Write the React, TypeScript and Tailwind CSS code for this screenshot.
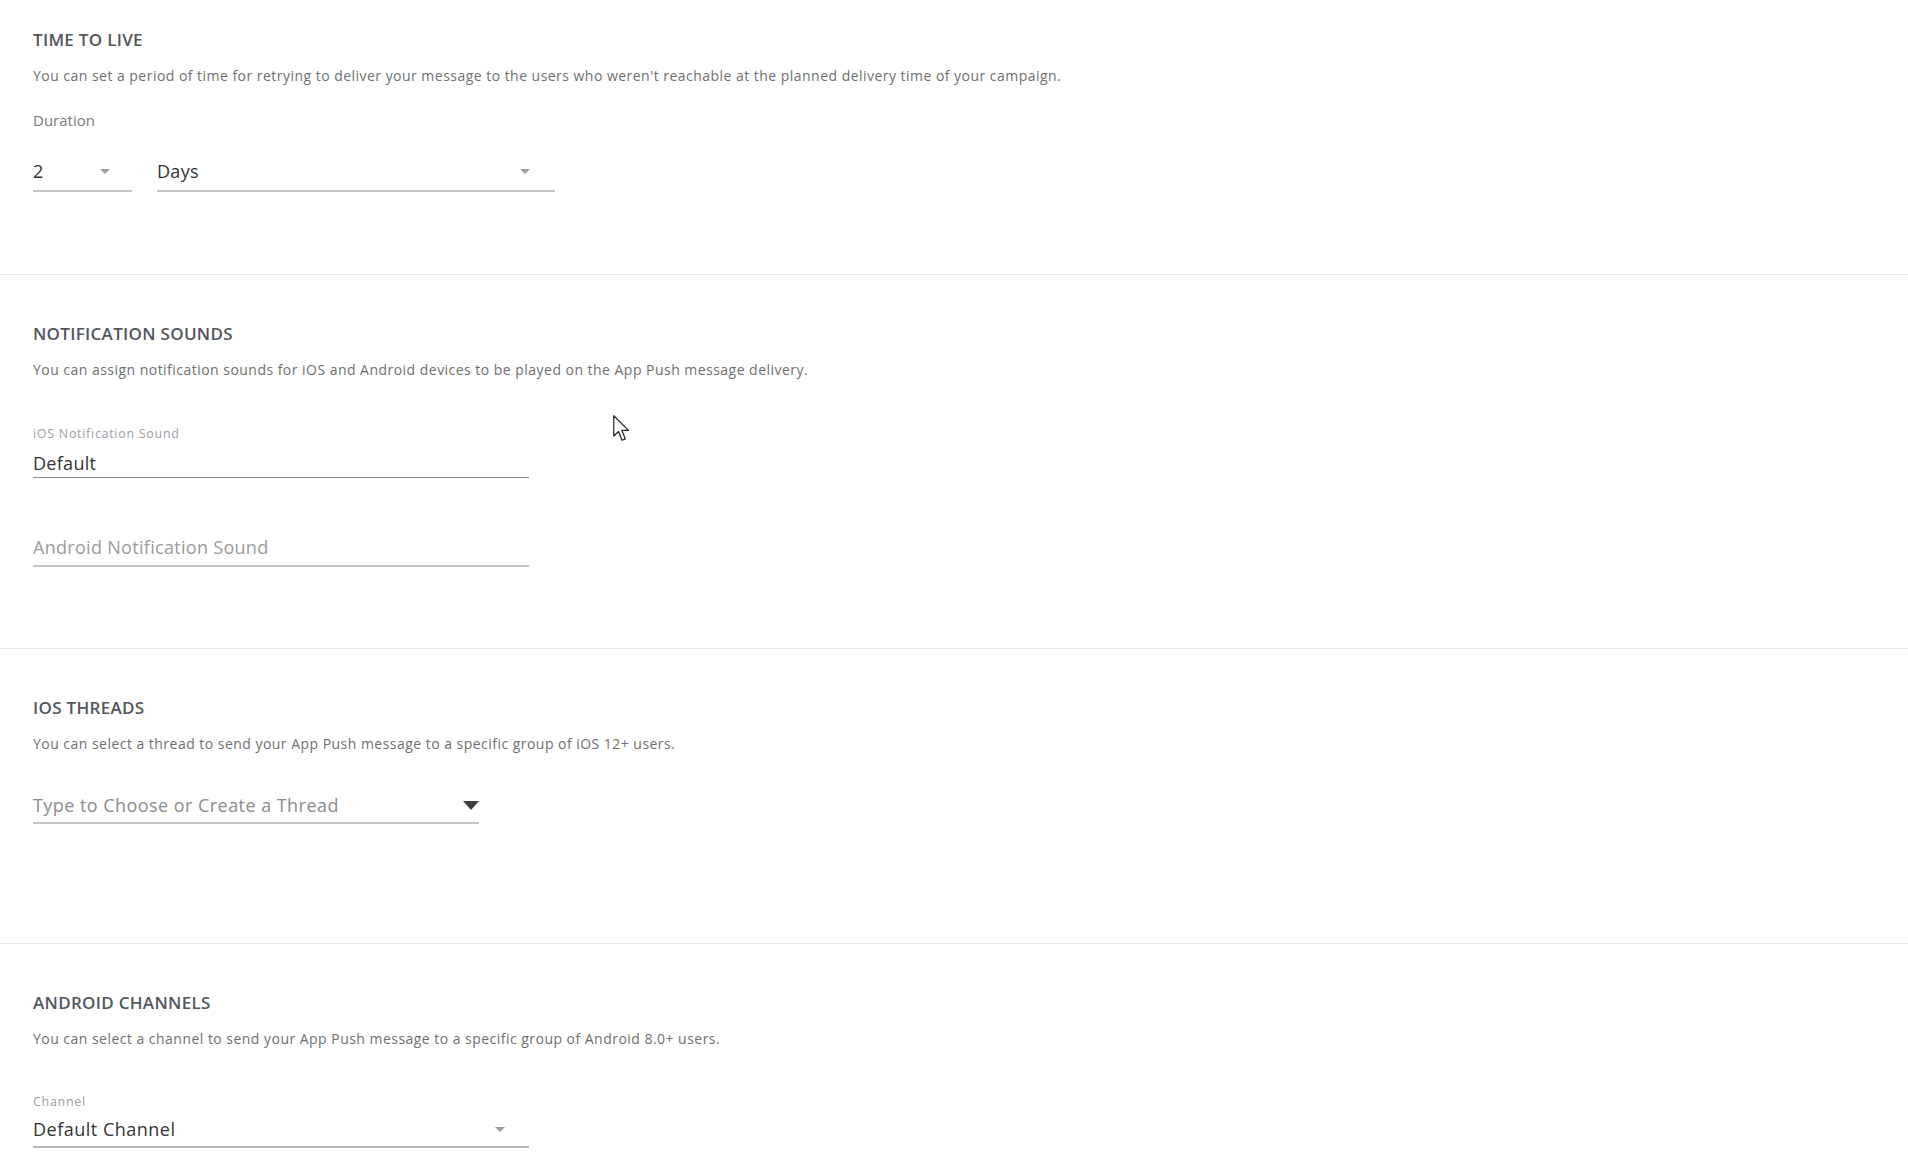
import type { ReactNode } from 'react';

const font = { fontFamily: '"Open Sans", "Liberation Sans", sans-serif' };

function Caret({ dark = false }: { dark?: boolean }) {
  if (dark) {
    return (
      <svg width="16" height="9" viewBox="0 0 16 9" className="shrink-0">
        <path d="M0 0 H16 L8 9 Z" fill="#3f3f3f" />
      </svg>
    );
  }
  return (
    <svg width="10" height="5" viewBox="0 0 10 5" className="shrink-0">
      <path d="M0 0 H10 L5 5 Z" fill="#9e9e9e" />
    </svg>
  );
}

function Section({
  title,
  description,
  className,
  children,
}: {
  title: string;
  description: string;
  className: string;
  children: ReactNode;
}) {
  return (
    <section className={`px-[33px] border-b border-[#e8e8e8] ${className}`}>
      <h2 className="text-[17px] leading-[24px] font-semibold tracking-[0.3px] text-[#52565d]">{title}</h2>
      <p className="mt-[14px] text-[14px] leading-[20px] tracking-[0.47px] text-[#6f6f6f]">{description}</p>
      {children}
    </section>
  );
}

export default function App() {
  return (
    <div className="relative min-h-[1175px] bg-white" style={font}>
      {/* time to live */}
      <Section
        title="TIME TO LIVE"
        description="You can set a period of time for retrying to deliver your message to the users who weren't reachable at the planned delivery time of your campaign."
        className="h-[275px] pt-[28px]"
      >
        <div className="mt-[24px] text-[15px] leading-[20px] text-[#7a7a7a]">Duration</div>
        <div className="mt-[29px] flex gap-[25px]">
          <div className="w-[99px] flex items-center justify-between pr-[22px] pb-[7px] border-b-2 border-[#c4c4c4]">
            <span className="text-[18px] leading-[24px] tracking-[0.3px] text-[#333]">2</span>
            <Caret />
          </div>
          <div className="w-[398px] flex items-center justify-between pr-[25px] pb-[7px] border-b-2 border-[#c4c4c4]">
            <span className="text-[18px] leading-[24px] tracking-[0.3px] text-[#333]">Days</span>
            <Caret />
          </div>
        </div>
      </Section>

      {/* notification sounds */}
      <Section
        title="NOTIFICATION SOUNDS"
        description="You can assign notification sounds for iOS and Android devices to be played on the App Push message delivery."
        className="h-[374px] pt-[47px]"
      >
        <div className="mt-[46px] w-[496px]">
          <div className="text-[12.5px] leading-[16px] tracking-[0.7px] text-[#9aa0a6]">iOS Notification Sound</div>
          <div className="mt-[9px] pb-[1px] border-b-[1.5px] border-[#8f8f8f]">
            <span className="text-[18px] leading-[24px] tracking-[0.3px] text-[#333]">Default</span>
          </div>
        </div>
        <div className="mt-[57px] w-[496px] pb-[5px] border-b-2 border-[#c4c4c4]">
          <span className="text-[18px] leading-[24px] tracking-[0.3px] text-[#9b9b9b]">Android Notification Sound</span>
        </div>
      </Section>

      {/* ios threads */}
      <Section
        title="IOS THREADS"
        description="You can select a thread to send your App Push message to a specific group of iOS 12+ users."
        className="h-[295px] pt-[47px]"
      >
        <div className="mt-[39px] w-[446px] flex items-center justify-between pb-[5px] border-b-2 border-[#c4c4c4]">
          <span className="text-[18px] leading-[24px] tracking-[0.45px] text-[#8c8c8c]">Type to Choose or Create a Thread</span>
          <Caret dark />
        </div>
      </Section>

      {/* android channels */}
      <section className="px-[33px] pt-[47px]">
        <h2 className="text-[17px] leading-[24px] font-semibold tracking-[0.3px] text-[#52565d]">ANDROID CHANNELS</h2>
        <p className="mt-[14px] text-[14px] leading-[20px] tracking-[0.47px] text-[#6f6f6f]">
          You can select a channel to send your App Push message to a specific group of Android 8.0+ users.
        </p>
        <div className="mt-[45px] w-[496px]">
          <div className="text-[12.5px] leading-[16px] tracking-[0.7px] text-[#9aa0a6]">Channel</div>
          <div className="mt-[7px] flex items-center justify-between pr-[24px] pb-[5px] border-b-2 border-[#b8b8b8]">
            <span className="text-[18px] leading-[24px] tracking-[0.5px] text-[#333]">Default Channel</span>
            <Caret />
          </div>
        </div>
      </section>

      {/* mouse pointer */}
      <svg
        width="18"
        height="27"
        viewBox="0 0 12 18"
        className="absolute left-[613px] top-[415px] pointer-events-none"
      >
        <path
          d="M0.5 0.5 L0.5 14 L3.7 11 L6 16.8 L8.2 15.9 L5.9 10.3 L10.3 10.3 Z"
          fill="#fff"
          stroke="#222"
          strokeWidth="0.8"
          strokeLinejoin="round"
        />
      </svg>
    </div>
  );
}
